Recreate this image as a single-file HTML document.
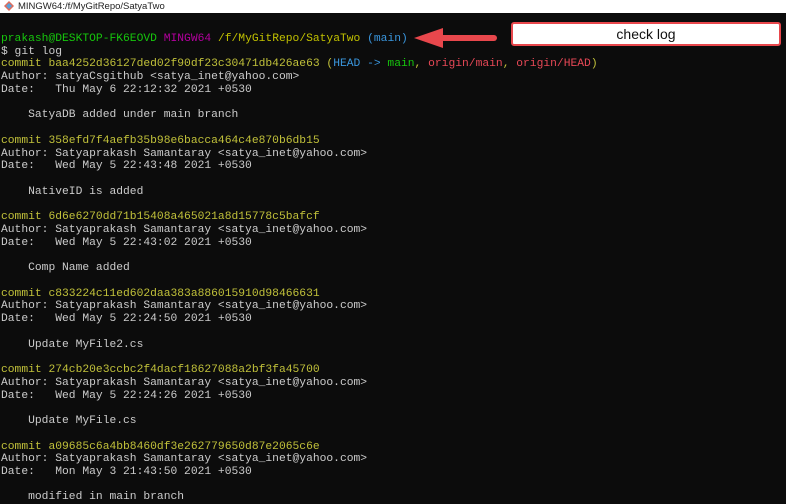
<!DOCTYPE html>
<html><head><meta charset="utf-8"><style>
html,body{margin:0;padding:0;width:786px;height:500px;overflow:hidden;background:#0c0c0c}
.title{position:absolute;left:0;top:0;width:786px;height:13px;background:#fff;font:9.5px "Liberation Sans",sans-serif;color:#222;line-height:13px}
.title span{position:absolute;left:18px;top:0}
pre{position:absolute;left:1px;top:33px;margin:0;font:11.3px/12.73px "Liberation Mono",monospace;color:#cccccc;white-space:pre}
.g{color:#16c60c}.m{color:#b4009e}.y{color:#c1c100}.c{color:#3a96dd}.r{color:#e74856}.yl{color:#c1c13a}
.box{position:absolute;left:511px;top:22px;width:266px;height:20px;border:2px solid #e8474c;border-radius:3px;background:#fff;font:14px "Liberation Sans",sans-serif;color:#111;text-align:center;line-height:20px}
</style></head><body>
<div class="title"><svg width="12" height="12" style="position:absolute;left:3px;top:0"><path d="M6 1L11 6L6 11L1 6Z" fill="#e06c5b"/><path d="M6 3L9 6L6 9L3 6Z" fill="#5aa0d8"/></svg><span>MINGW64:/f/MyGitRepo/SatyaTwo</span></div>
<pre><span class="g">prakash@DESKTOP-FK6EOVD</span> <span class="m">MINGW64</span> <span class="y">/f/MyGitRepo/SatyaTwo</span> <span class="c">(main)</span>
$ git log
<span class="yl">commit baa4252d36127ded02f90df23c30471db426ae63 (</span><span class="c">HEAD -&gt; </span><span class="g">main</span><span class="yl">, </span><span class="r">origin/main</span><span class="yl">, </span><span class="r">origin/HEAD</span><span class="yl">)</span>
Author: satyaCsgithub &lt;satya_inet@yahoo.com&gt;
Date:   Thu May 6 22:12:32 2021 +0530

    SatyaDB added under main branch

<span class="yl">commit 358efd7f4aefb35b98e6bacca464c4e870b6db15</span>
Author: Satyaprakash Samantaray &lt;satya_inet@yahoo.com&gt;
Date:   Wed May 5 22:43:48 2021 +0530

    NativeID is added

<span class="yl">commit 6d6e6270dd71b15408a465021a8d15778c5bafcf</span>
Author: Satyaprakash Samantaray &lt;satya_inet@yahoo.com&gt;
Date:   Wed May 5 22:43:02 2021 +0530

    Comp Name added

<span class="yl">commit c833224c11ed602daa383a886015910d98466631</span>
Author: Satyaprakash Samantaray &lt;satya_inet@yahoo.com&gt;
Date:   Wed May 5 22:24:50 2021 +0530

    Update MyFile2.cs

<span class="yl">commit 274cb20e3ccbc2f4dacf18627088a2bf3fa45700</span>
Author: Satyaprakash Samantaray &lt;satya_inet@yahoo.com&gt;
Date:   Wed May 5 22:24:26 2021 +0530

    Update MyFile.cs

<span class="yl">commit a09685c6a4bb8460df3e262779650d87e2065c6e</span>
Author: Satyaprakash Samantaray &lt;satya_inet@yahoo.com&gt;
Date:   Mon May 3 21:43:50 2021 +0530

    modified in main branch</pre>
<svg style="position:absolute;left:410px;top:26px" width="90" height="24"><line x1="30" y1="12" x2="84" y2="12" stroke="#e8474c" stroke-width="6" stroke-linecap="round"/><path d="M4 12L33 2L33 22Z" fill="#e8474c"/></svg>
<div class="box">check log</div>
</body></html>
